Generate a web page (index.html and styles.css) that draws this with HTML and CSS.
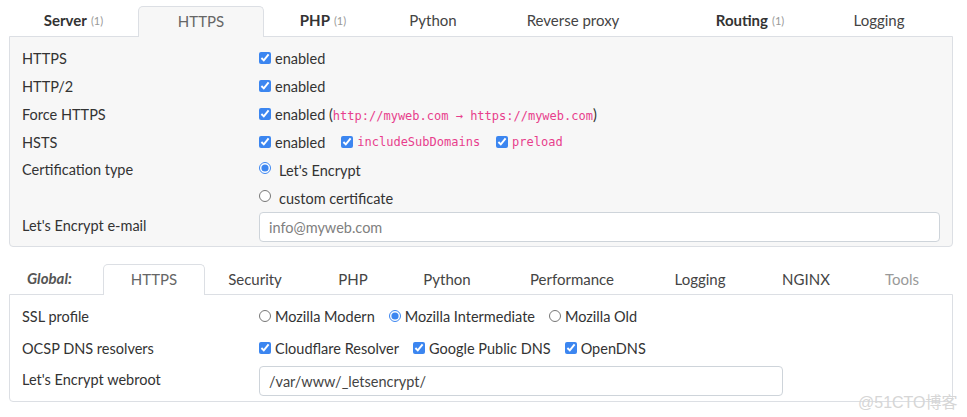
FILE: index.html
```html
<!DOCTYPE html>
<html lang="en">
<head>
<meta charset="utf-8">
<title>HTTPS config</title>
<link rel="stylesheet" href="styles.css">
</head>
<body>
<div class="page">
  <section class="block">
    <nav class="tabs tabs-top">
      <span class="tab t-server"><b>Server</b><small>(1)</small></span>
      <span class="tab t-https active">HTTPS</span>
      <span class="tab t-php"><b>PHP</b><small>(1)</small></span>
      <span class="tab t-python">Python</span>
      <span class="tab t-proxy">Reverse proxy</span>
      <span class="tab t-routing"><b>Routing</b><small>(1)</small></span>
      <span class="tab t-logging">Logging</span>
    </nav>
    <div class="panel panel-grey">
      <div class="row"><div class="label">HTTPS</div><div class="value"><label class="opt"><input type="checkbox" checked><span>enabled</span></label></div></div>
      <div class="row"><div class="label">HTTP/2</div><div class="value"><label class="opt"><input type="checkbox" checked><span>enabled</span></label></div></div>
      <div class="row"><div class="label">Force HTTPS</div><div class="value"><label class="opt"><input type="checkbox" checked><span>enabled (<code>http://myweb.com → https://myweb.com</code>)</span></label></div></div>
      <div class="row"><div class="label">HSTS</div><div class="value gap"><label class="opt"><input type="checkbox" checked><span>enabled</span></label><label class="opt"><input type="checkbox" checked><code>includeSubDomains</code></label><label class="opt"><input type="checkbox" checked><code>preload</code></label></div></div>
      <div class="row row-multi"><div class="label">Certification type</div>
        <div class="value col">
          <label class="opt radio-line"><input type="radio" name="cert" checked><span>Let's Encrypt</span></label>
          <label class="opt radio-line"><input type="radio" name="cert"><span>custom certificate</span></label>
        </div>
      </div>
      <div class="row row-input"><div class="label label-up">Let's Encrypt e-mail</div><div class="value"><input class="text-input full" type="text" placeholder="info@myweb.com"></div></div>
    </div>
  </section>

  <section class="block block-global">
    <nav class="tabs tabs-bottom">
      <span class="tab-label">Global:</span>
      <span class="tab g-https active">HTTPS</span>
      <span class="tab g-security">Security</span>
      <span class="tab g-php">PHP</span>
      <span class="tab g-python">Python</span>
      <span class="tab g-perf">Performance</span>
      <span class="tab g-logging">Logging</span>
      <span class="tab g-nginx">NGINX</span>
      <span class="tab g-tools muted">Tools</span>
    </nav>
    <div class="panel panel-white">
      <div class="row row-tall"><div class="label">SSL profile</div><div class="value gap2"><label class="opt"><input type="radio" name="ssl"><span>Mozilla Modern</span></label><label class="opt"><input type="radio" name="ssl" checked><span>Mozilla Intermediate</span></label><label class="opt"><input type="radio" name="ssl"><span>Mozilla Old</span></label></div></div>
      <div class="row row-tall"><div class="label">OCSP DNS resolvers</div><div class="value gap2"><label class="opt"><input type="checkbox" checked><span>Cloudflare Resolver</span></label><label class="opt"><input type="checkbox" checked><span>Google Public DNS</span></label><label class="opt"><input type="checkbox" checked><span>OpenDNS</span></label></div></div>
      <div class="row row-input2"><div class="label label-up">Let's Encrypt webroot</div><div class="value"><input class="text-input half" type="text" value="/var/www/_letsencrypt/"></div></div>
    </div>
  </section>
  <div class="watermark">@51CTO博客</div>
</div>
</body>
</html>
```

FILE: styles.css
```css
* { box-sizing: border-box; }
html, body { margin: 0; padding: 0; background: #fff; }
body {
  font-family: Lato, "Noto Sans", "Noto Sans CJK SC", sans-serif;
  font-size: 14.5px;
  color: #333;
  width: 967px;
  height: 417px;
  overflow: hidden;
}
.page {
  position: relative;
  padding: 6px 14px 0 9px;
  height: 417px;
}
.tabs {
  display: flex;
  align-items: stretch;
  height: 30px;
}
.tab {
  flex: none;
  display: flex;
  align-items: center;
  justify-content: center;
  white-space: nowrap;
  border: 1px solid transparent;
  border-bottom: none;
  border-radius: 5px 5px 0 0;
  color: #444;
  font-size: 15px;
  padding-bottom: 3px;
  position: relative;
}
.tabs-bottom .tab { padding-bottom: 2px; }
.tab b { font-weight: 700; color: #333; }
.tab small { font-size: 11px; color: #999; margin-left: 4px; }
.tab.active {
  border-color: #dcdfe4;
  color: #666;
  z-index: 1;
  margin-bottom: -1px;
}
.tabs-top .tab.active { background: #f7f7f7; }
.tabs-bottom .tab.active { background: #fff; }
.tab.muted { color: #999; }

.t-server { width: 129px; }
.t-https { width: 126px; }
.t-php { width: 118px; }
.t-python { width: 102px; }
.t-proxy { width: 178px; }
.t-routing { width: 176px; }
.t-logging { width: 82px; }

.g-https { width: 102px; }
.g-security { width: 100px; }
.g-php { width: 96px; }
.g-python { width: 92px; }
.g-perf { width: 158px; }
.g-logging { width: 98px; }
.g-nginx { width: 114px; }
.g-tools { width: 78px; }

.tab-label {
  width: 94px;
  display: flex;
  align-items: center;
  padding: 0 0 2px 18px;
  font-style: italic;
  font-weight: 700;
  color: #555;
  font-size: 15px;
}
.panel {
  border: 1px solid #dcdfe4;
  border-radius: 0 0 4px 4px;
  padding: 7px 12px 4px;
}
.panel-grey { background: #f7f7f7; }
.panel-white { background: #fff; padding: 5px 12px 5px; }
.block-global { margin-top: 17px; }
.row {
  display: flex;
  align-items: center;
  min-height: 28px;
}
.row-tall { min-height: 32px; }
.label {
  width: 237px;
  flex: none;
  color: #333;
}
.label-up { padding-bottom: 3px; }
.value { display: flex; align-items: center; flex: 1; }
.value.gap { gap: 16px; }
.value.gap2 { gap: 14px; }
.value.col { flex-direction: column; align-items: flex-start; }
.row-multi { align-items: flex-start; }
.row-multi .label { line-height: 28px; }
.radio-line { height: 28px; }
.opt {
  display: inline-flex;
  align-items: center;
  gap: 4px;
  color: #333;
  white-space: nowrap;
}
.radio-line { gap: 8px; }
.radio-line input { margin-top: -4px !important; }
input[type=checkbox], input[type=radio] {
  margin: 0;
  width: 12px;
  height: 12px;
  accent-color: #3c86f0;
}
code {
  font-family: "DejaVu Sans Mono", monospace;
  font-size: 12px;
  color: #e83e8c;
}
.text-input {
  height: 30px;
  border: 1px solid #ced4da;
  border-radius: 4px;
  background: #fff;
  padding: 0 9px;
  font-family: Lato, "Noto Sans", sans-serif;
  font-size: 14.5px;
  color: #444;
}
.text-input::placeholder { color: #808080; }
.full { width: 100%; }
.half { width: 524px; }
.row-input2 { margin-top: 2px; }
.watermark {
  position: absolute;
  left: 858px;
  top: 389px;
  font-size: 16px;
  color: #d6d6d6;
  font-family: "Liberation Sans", "Noto Sans CJK SC", sans-serif;
  white-space: nowrap;
}
```
